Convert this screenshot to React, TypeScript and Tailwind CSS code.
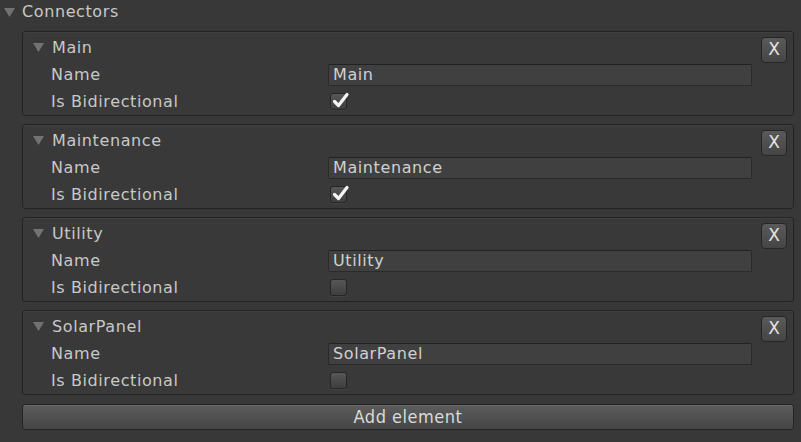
import React from "react";

type Connector = { name: string; bidirectional: boolean };

const connectors: Connector[] = [
  { name: "Main", bidirectional: true },
  { name: "Maintenance", bidirectional: true },
  { name: "Utility", bidirectional: false },
  { name: "SolarPanel", bidirectional: false },
];

const Arrow = () => (
  <svg width="11" height="9" viewBox="0 0 11 9" className="shrink-0">
    <path d="M0 0 L11 0 L5.5 9 Z" fill="#727272" />
  </svg>
);

const Checkbox = ({ checked }: { checked: boolean }) => (
  <div className="relative w-[17px] h-[17px] rounded-[3px] border border-[#262626] bg-gradient-to-b from-[#575757] to-[#3e3e3e] shadow-[0_1px_0_rgba(255,255,255,0.05)]">
    {checked && (
      <svg width="18" height="17" viewBox="0 0 18 17" className="absolute left-[1px] top-[-2px]">
        <path d="M2.5 9.5 L6.5 13.5 L15 2.5" stroke="#f4f4f4" strokeWidth="3.2" fill="none" strokeLinecap="round" strokeLinejoin="round" />
      </svg>
    )}
  </div>
);

const ConnectorBox = ({ item }: { item: Connector }) => (
  <div className="relative h-[85px] rounded-[3px] border border-[#232323] bg-[#393939] pt-[2px] pl-[10px] shadow-[inset_0_1px_0_rgba(255,255,255,0.04)]">
    <div className="h-[27px] flex items-center gap-[8px]">
      <Arrow />
      <span>{item.name}</span>
    </div>
    <div className="h-[27px] flex items-center">
      <span className="w-[295px] pl-[18px]">Name</span>
      <div className="w-[424px] h-[22px] rounded-[2px] border border-[#2a2a2a] border-t-[#222] bg-[#404040] pl-[4px] flex items-center text-[#d0d0d0]">
        {item.name}
      </div>
    </div>
    <div className="h-[27px] flex items-center">
      <span className="w-[297px] pl-[18px]">Is Bidirectional</span>
      <Checkbox checked={item.bidirectional} />
    </div>
    <button className="absolute top-[5px] right-[6px] w-[26px] h-[26px] rounded-[4px] border border-[#262626] bg-gradient-to-b from-[#5a5a5a] to-[#454545] text-[#e4e4e4] text-[17px] tracking-normal flex items-center justify-center">
      X
    </button>
  </div>
);

export default function App() {
  return (
    <div
      className="w-[801px] h-[442px] bg-[#383838] text-[#c8c8c8] text-[16px] tracking-[0.6px] overflow-hidden"
      style={{ fontFamily: '"DejaVu Sans", Verdana, sans-serif' }}
    >
      <div className="h-[24px] flex items-center gap-[7px] pl-[4px]">
        <Arrow />
        <span>Connectors</span>
      </div>
      <div className="pl-[22px] pr-[7px] pt-[7px] flex flex-col gap-[8px]">
        {connectors.map((c) => (
          <ConnectorBox key={c.name} item={c} />
        ))}
        <button
          className="mt-[1px] h-[26px] w-full rounded-[3px] border border-[#242424] bg-gradient-to-b from-[#5c5c5c] to-[#464646] text-[#dadada] text-[18px] tracking-[0.5px] flex items-center justify-center pb-[2px] shadow-[inset_0_1px_0_rgba(255,255,255,0.08)]"
          style={{ fontFamily: '"DejaVu Sans Condensed", "DejaVu Sans", sans-serif' }}
        >
          Add element
        </button>
      </div>
    </div>
  );
}
